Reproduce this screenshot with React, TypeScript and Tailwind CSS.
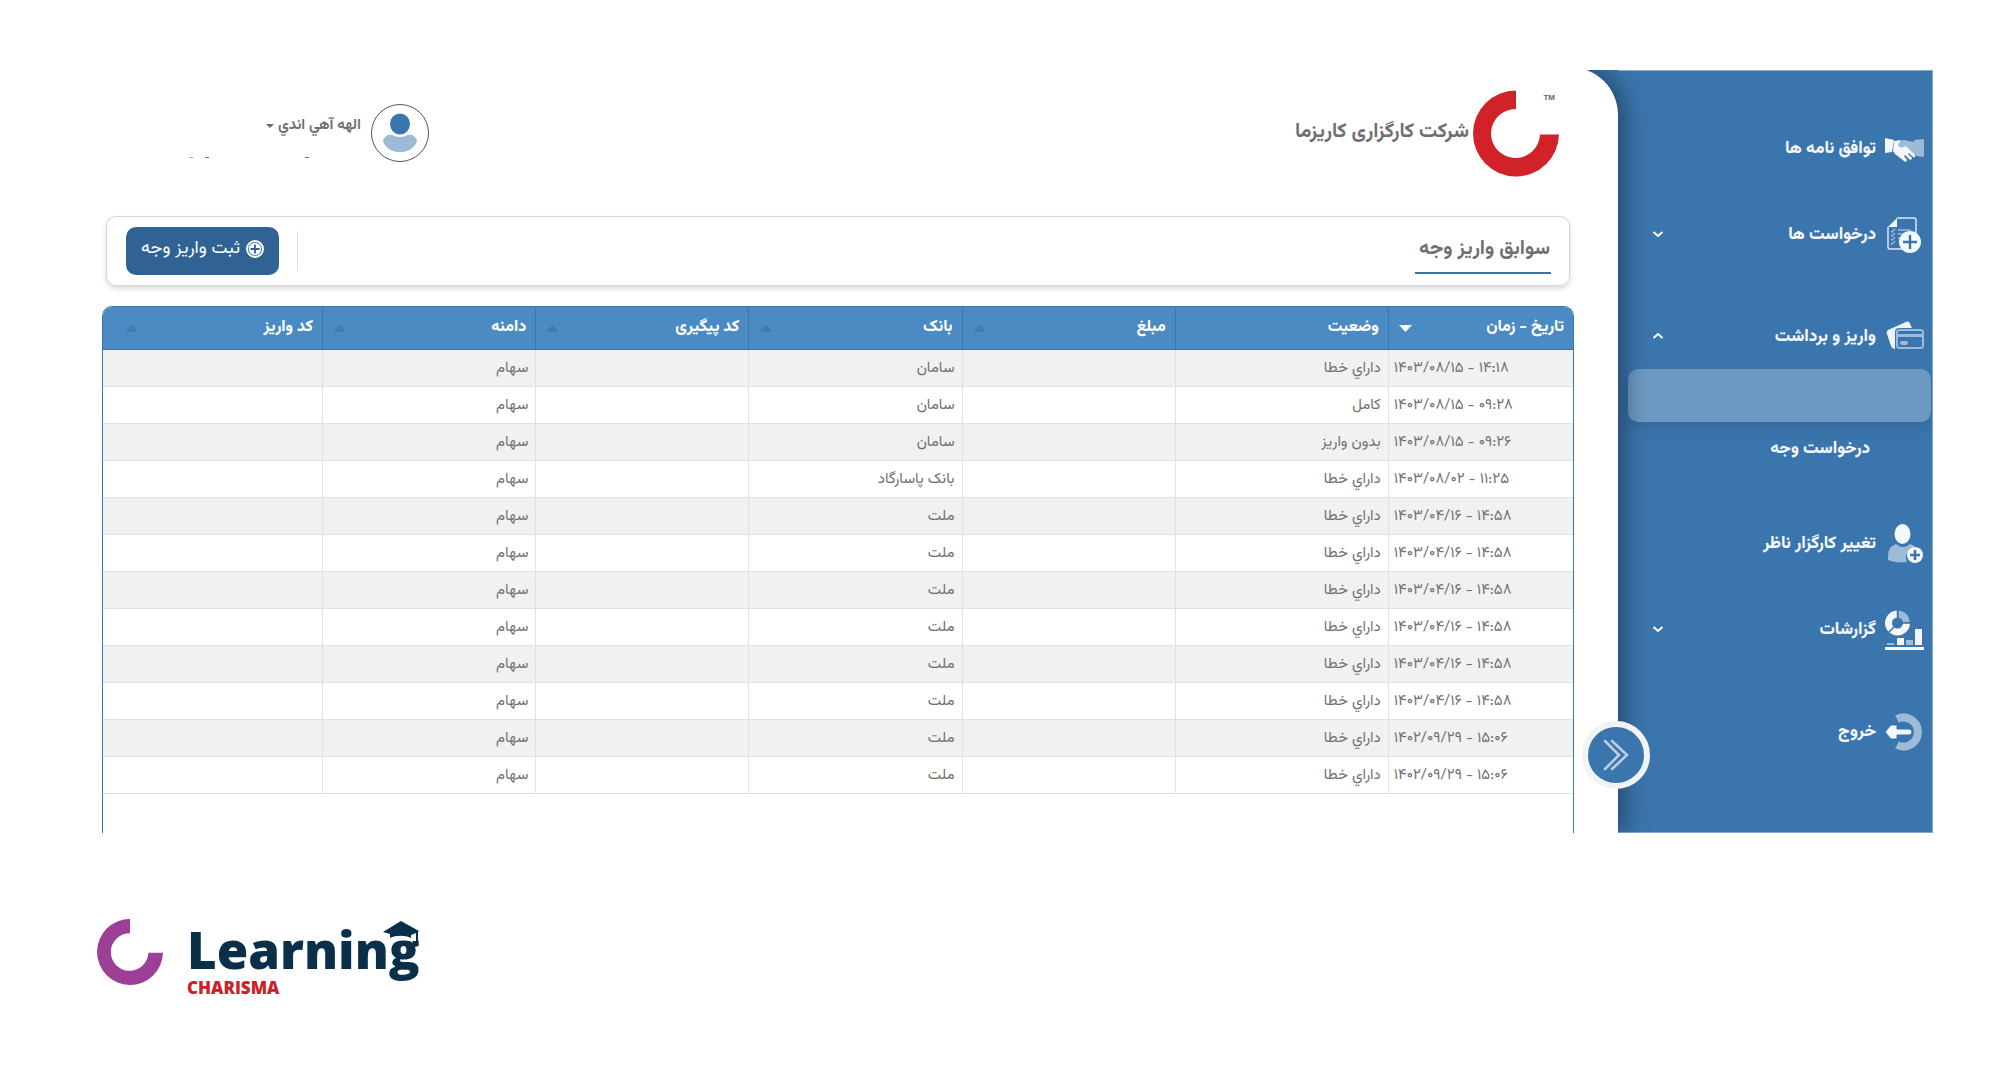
import type { ReactNode } from "react";

const HandshakeIcon = () => (
  <svg viewBox="0 0 40 40" className="size-10" aria-hidden="true">
    <path d="M1 9l9 2-2 12-7 1z" fill="#f4f7fb" />
    <path d="M30 11l10-1v18l-8-1z" fill="#9dbad6" />
    <path d="M13 16c3-5 7-6 11-4l7 1 1 13-4 1-8-9c-2 2-5 3-6 1z" fill="#9dbad6" />
    <path d="M10 12l7-1-3 5c1 3 5 3 8 1l9 9c1 2-1 3-2 2l-4-4-1 1 4 4c0 2-2 2-3 1l-4-4-1 1 3 4c0 2-2 2-3 1l-9-7-2-3z" fill="#f4f7fb" />
  </svg>
);

const DocumentPlusIcon = () => (
  <svg viewBox="0 0 40 40" className="size-10" fill="none" aria-hidden="true">
    <path d="M13 3h17c1 0 2 1 2 2v13M18 34H6c-1 0-2-1-2-2V12" stroke="#dbe6f1" strokeWidth="1.5" />
    <path d="M4 12l9-9v8c0 1 0 1-1 1z" fill="#f4f7fb" />
    <path d="M7 16l1 1 3-3M7 20l1 1 3-3M7 24l1 1 3-3M7 28l1 1 3-3M14 15h13M14 19h10M14 23h4" stroke="#9dbad6" strokeWidth="1.3" />
    <circle cx="26" cy="27" r="11" fill="#f4f7fb" />
    <path d="M26 20v14M19 27h14" stroke="#3b75ad" strokeWidth="2.4" />
  </svg>
);

const CardsIcon = () => (
  <svg viewBox="0 0 40 40" className="size-10" fill="none" aria-hidden="true">
    <path d="M3 17c-1-2 0-3 1-4L22 5c2-1 4 0 4 2l2 4H15c-3 0-4 2-4 4v17c-2 0-3-1-4-3z" fill="#f0f4f8" />
    <rect x="13" y="13" width="26" height="18" rx="2.5" stroke="#9dbad6" strokeWidth="2" />
    <path d="M13 18.500h26" stroke="#9dbad6" strokeWidth="3" />
    <rect x="16" y="24" width="8" height="4" rx="2" fill="#9dbad6" />
  </svg>
);

const UserPlusIcon = () => (
  <svg viewBox="0 0 40 40" className="size-10" fill="none" aria-hidden="true">
    <path d="M4 36c0-10 1-13 8-16 5 4 9 4 14 0 3 1 5 2 6 4-8 1-12 7-9 14-8 1-13 0-19-2z" fill="#9dbad6" />
    <ellipse cx="18.500" cy="10" rx="8" ry="10" fill="#f4f7fb" />
    <circle cx="31" cy="31" r="8" fill="#f4f7fb" />
    <path d="M31 26v10M26 31h10" stroke="#3b75ad" strokeWidth="2.6" />
  </svg>
);

const ReportIcon = () => (
  <svg viewBox="0 0 40 40" className="size-10" fill="none" aria-hidden="true">
    <circle cx="13.500" cy="13" r="9" stroke="#f4f7fb" strokeWidth="7" />
    <path d="M13.500 4A9 9 0 0 1 22.500 13" stroke="#3b75ad" strokeWidth="8" />
    <path d="M14.500 4A9 9 0 0 1 22.500 12" stroke="#9dbad6" strokeWidth="7" />
    <path d="M13.500 0v9M18 13h9M10 17l-6 6" stroke="#3b75ad" strokeWidth="1.5" />
    <path d="M3 33h7v2H3zM22 30h7v5h-7z" fill="#9dbad6" />
    <path d="M13 28h7v7h-7zM31 19h7v16h-7zM1 37h39v3H1z" fill="#f4f7fb" />
  </svg>
);

const ExitIcon = () => (
  <svg viewBox="0 0 40 40" className="size-10" fill="none" aria-hidden="true">
    <path d="M12 7a14.500 14.500 0 1 1 0 26" stroke="#9dbad6" strokeWidth="8" transform="translate(1 0)" />
    <path d="M25 17H13v-4H7l-6 7 6 7h6v-4h12a3 3 0 0 0 0-6z" fill="#f4f7fb" stroke="#3b75ad" strokeWidth="1" />
  </svg>
);

const Chevron = ({ up = false }: { up?: boolean }) => (
  <svg viewBox="0 0 12 8" className="mb-0.5 h-2 w-3 text-white" fill="none" aria-hidden="true">
    <path d={up ? "M1.500 6L6 2l4.500 4" : "M1.500 2L6 6l4.500-4"} stroke="currentColor" strokeWidth="2" />
  </svg>
);

const Ring = ({ className, fill }: { className: string; fill: string }) => (
  <svg viewBox="0 0 86 86" className={className} aria-hidden="true">
    <path d="M43 0A43 43 0 1 0 86 44H67A24.500 24.500 0 1 1 43 18.500z" fill={fill} />
  </svg>
);

function NavButton({ icon, label, chevron }: { icon: ReactNode; label: string; chevron?: "up" | "down" }) {
  return (
    <button type="button" className="flex h-12 w-full items-center gap-2 ps-2 pe-[34px] text-[17px] font-extrabold text-[#f4f7fb]">
      {icon}
      <span className="flex-1 pt-0.5 text-start">{label}</span>
      {chevron && <Chevron up={chevron === "up"} />}
    </button>
  );
}

function Sidebar() {
  return (
    <aside className="w-[315px] shrink-0 border-t border-r border-b border-[#86aacd] bg-[#3b75ad] pt-[54px]">
      <nav>
        <ul>
          <li><NavButton icon={<HandshakeIcon />} label="توافق نامه ها" /></li>
          <li className="mt-[38px]"><NavButton icon={<DocumentPlusIcon />} label="درخواست ها" chevron="down" /></li>
          <li className="mt-[54px]">
            <NavButton icon={<CardsIcon />} label="واریز و برداشت" chevron="up" />
            <a href="#deposit" aria-label="واریز وجه" className="ms-px me-[10px] mt-2 block h-[53px] rounded-[10px] bg-[#6c98c2] shadow-[0_6px_14px_rgba(0,0,0,0.1)]" />
            <a href="#withdraw" className="mt-1 flex h-12 items-center ps-[62px] text-[17px] font-extrabold text-[#f4f7fb]">درخواست وجه</a>
          </li>
          <li className="mt-[46px]"><NavButton icon={<UserPlusIcon />} label="تغییر کارگزار ناظر" /></li>
          <li className="mt-[38px]"><NavButton icon={<ReportIcon />} label="گزارشات" chevron="down" /></li>
          <li className="mt-[54px]"><NavButton icon={<ExitIcon />} label="خروج" /></li>
        </ul>
      </nav>
    </aside>
  );
}

function Header() {
  return (
    <header className="flex items-start justify-between ps-[15px] pe-[87px]">
      <div className="flex items-center gap-1">
        <div className="relative">
          <Ring className="h-[87px] w-[86px]" fill="#d12229" />
          <span dir="ltr" className="absolute top-0.5 right-1 font-['Liberation_Sans'] text-[8px] font-bold text-[#666]">TM</span>
        </div>
        <h1 className="pb-1 text-[20px] font-bold text-[#6f6f6f]">شرکت کارگزاری کاریزما</h1>
      </div>
      <div className="mt-3.5 flex gap-2.5">
        <div className="flex size-[58px] items-center justify-center rounded-full border border-[#555]">
          <svg viewBox="0 0 34 40" className="h-10 w-[34px]" aria-hidden="true">
            <ellipse cx="17" cy="11" rx="10" ry="10.500" fill="#3b75ad" />
            <path d="M5 22c7-1 4 2 12 2s5-3 12-2c3 1 5 4 5 6-5 15-29 15-34 0 0-2 2-5 5-6z" fill="#9dbad6" />
          </svg>
        </div>
        <div className="w-[172px] pt-2">
          <button type="button" className="flex items-center gap-1 text-[15px] leading-7 font-bold text-[#6f6f6f]">
            الهه آهي اندي
            <svg viewBox="0 0 8 4" className="h-1 w-2" aria-hidden="true"><path d="M0 0h8L4 4z" fill="#6b6b6b" /></svg>
          </button>
          <div className="mt-[17px] flex gap-1.5 ps-[52px]" aria-hidden="true">
            <span className="me-[90px] h-px w-1 bg-[#777]" />
            <span className="h-px w-1 bg-[#777]" />
            <span className="ms-1.5 h-px w-1 bg-[#aaa]" />
          </div>
        </div>
      </div>
    </header>
  );
}

function Toolbar() {
  return (
    <section className="mx-1 mt-[39px] flex h-[70px] items-center justify-between rounded-[10px] border border-[#d5d5d5] ps-[18px] pe-[19px] shadow-[0_3px_5px_rgba(0,0,0,0.14)]">
      <h2 className="mt-0.5 border-b-2 border-[#41709b] ps-px pe-1 pb-[5px] text-[20px] leading-9 font-bold text-[#6f6f6f]">سوابق واریز وجه</h2>
      <div className="flex items-center gap-[18px]">
        <span className="h-10 w-px bg-[#dcdcdc]" />
        <button type="button" className="flex h-12 items-center gap-1.5 rounded-[10px] bg-[#306393] px-[15px] pb-1 text-[18px] text-white">
          <svg viewBox="0 0 18 18" className="size-[18px]" fill="none" aria-hidden="true">
            <circle cx="9" cy="9" r="8" stroke="#fff" strokeWidth="2" />
            <circle cx="9" cy="9" r="6.200" fill="#fff" />
            <path d="M9 4.500v9M4.500 9h9" stroke="#306393" strokeWidth="1.800" />
          </svg>
          ثبت واریز وجه
        </button>
      </div>
    </section>
  );
}

type Sort = "active" | "idle" | "none";
const columns: { title: string; sort: Sort }[] = [
  { title: "تاریخ - زمان", sort: "active" },
  { title: "وضعیت", sort: "none" },
  { title: "مبلغ", sort: "idle" },
  { title: "بانک", sort: "idle" },
  { title: "کد پیگیری", sort: "idle" },
  { title: "دامنه", sort: "idle" },
  { title: "کد واریز", sort: "idle" },
];

const rows: [string, string, string][] = [
  ["۱۴۰۳/۰۸/۱۵ - ۱۴:۱۸", "داراي خطا", "سامان"],
  ["۱۴۰۳/۰۸/۱۵ - ۰۹:۲۸", "کامل", "سامان"],
  ["۱۴۰۳/۰۸/۱۵ - ۰۹:۲۶", "بدون واریز", "سامان"],
  ["۱۴۰۳/۰۸/۰۲ - ۱۱:۲۵", "داراي خطا", "بانک پاسارگاد"],
  ["۱۴۰۳/۰۴/۱۶ - ۱۴:۵۸", "داراي خطا", "ملت"],
  ["۱۴۰۳/۰۴/۱۶ - ۱۴:۵۸", "داراي خطا", "ملت"],
  ["۱۴۰۳/۰۴/۱۶ - ۱۴:۵۸", "داراي خطا", "ملت"],
  ["۱۴۰۳/۰۴/۱۶ - ۱۴:۵۸", "داراي خطا", "ملت"],
  ["۱۴۰۳/۰۴/۱۶ - ۱۴:۵۸", "داراي خطا", "ملت"],
  ["۱۴۰۳/۰۴/۱۶ - ۱۴:۵۸", "داراي خطا", "ملت"],
  ["۱۴۰۲/۰۹/۲۹ - ۱۵:۰۶", "داراي خطا", "ملت"],
  ["۱۴۰۲/۰۹/۲۹ - ۱۵:۰۶", "داراي خطا", "ملت"],
];

const cell = "border-b border-l border-[#dee2e6] px-[7px] pt-0.5 last:border-l-0";

function DepositTable() {
  return (
    <div className="mt-5 overflow-hidden rounded-t-[10px] border border-b-0 border-[#3c76a8] pb-[39px]">
      <table className="w-full table-fixed border-separate border-spacing-0 text-start text-[15px] text-[#707070]">
        <colgroup>
          <col className="w-[12.6%]" />
          <col className="w-[14.5%]" />
          <col className="w-[14.5%]" />
          <col className="w-[14.5%]" />
          <col className="w-[14.5%]" />
          <col className="w-[14.5%]" />
          <col />
        </colgroup>
        <thead>
          <tr className="h-[43px] bg-[#4b8ac2] text-[16px] text-white">
            {columns.map(({ title, sort }) => (
              <th key={title} scope="col" className="border-b border-l border-[#3c76a8] ps-[9px] pe-2.5 font-extrabold last:border-l-0 last:pe-[22px]">
                <span className="flex items-center justify-between">
                  {title}
                  {sort === "active" && (
                    <svg viewBox="0 0 13 7" className="h-[7px] w-[13px]" aria-hidden="true"><path d="M0 0h13L6.500 7z" fill="#fff" /></svg>
                  )}
                  {sort === "idle" && (
                    <svg viewBox="0 0 13 7" className="h-[7px] w-[13px]" aria-hidden="true"><path d="M0 7h13L6.500 0z" fill="#3f7ab0" /></svg>
                  )}
                </span>
              </th>
            ))}
          </tr>
        </thead>
        <tbody>
          {rows.map(([date, status, bank], i) => (
            <tr key={i} className="h-[37px] odd:bg-[#f1f1f1]">
              <td dir="ltr" className="border-b border-l border-[#dee2e6] ps-[6px] pt-0.5 text-left">{date}</td>
              <td className={cell}>{status}</td>
              <td className={cell} />
              <td className={cell}>{bank}</td>
              <td className={cell} />
              <td className={cell}>سهام</td>
              <td className={cell} />
            </tr>
          ))}
        </tbody>
      </table>
    </div>
  );
}

function LearningLogo() {
  return (
    <footer dir="ltr" className="flex items-start gap-6 ps-[17px] pt-[86px]">
      <Ring className="size-[66px]" fill="#9d3f97" />
      <div className="relative font-['Open_Sans']">
        <p className="text-[51px] leading-[60px] font-extrabold text-[#0a3049]">Learning</p>
        <p className="text-[17px] leading-[18px] font-extrabold text-[#cb2229]">CHARISMA</p>
        <svg viewBox="0 0 37 22" className="absolute top-0.5 left-[196px] h-[22px] w-[37px] overflow-visible" aria-hidden="true">
          <path d="M7 11v8c6-4 15-4 21 0v-8z" fill="#fff" stroke="#fff" strokeWidth="3" />
          <path d="M0 11L18 0l18 10-1 1v9h-2v-8l-5 2v3c-6-3-15-3-21 0v-4z" fill="#0a3049" />
        </svg>
      </div>
    </footer>
  );
}

export default function App() {
  return (
    <div dir="rtl" className="min-h-screen bg-white pt-[70px] pr-[67px] pl-20 font-[Vazirmatn,'DejaVu_Sans',sans-serif]">
      <div className="flex overflow-hidden">
        <div className="flex w-full bg-[#3b75ad]">
          <Sidebar />
          <main className="relative z-10 -mt-[3px] flex-1 rounded-tr-[48px] bg-white ps-11 pe-[22px] pt-[23px] shadow-[6px_0_25px_rgba(0,0,0,0.4)]">
            <Header />
            <Toolbar />
            <DepositTable />
            <button type="button" aria-label="باز و بسته کردن منو" className="absolute -right-8 bottom-11 flex size-[68px] items-center justify-center rounded-full border-[6px] border-[#f1f3f5] bg-[#3b75ad]">
              <svg viewBox="0 0 26 32" className="h-8 w-[26px]" fill="none" aria-hidden="true">
                <path d="M2 2l14 14L2 30M9 2l15 14L9 30" stroke="#bccfe2" strokeWidth="2.500" strokeLinecap="round" />
              </svg>
            </button>
          </main>
        </div>
      </div>
      <LearningLogo />
    </div>
  );
}
